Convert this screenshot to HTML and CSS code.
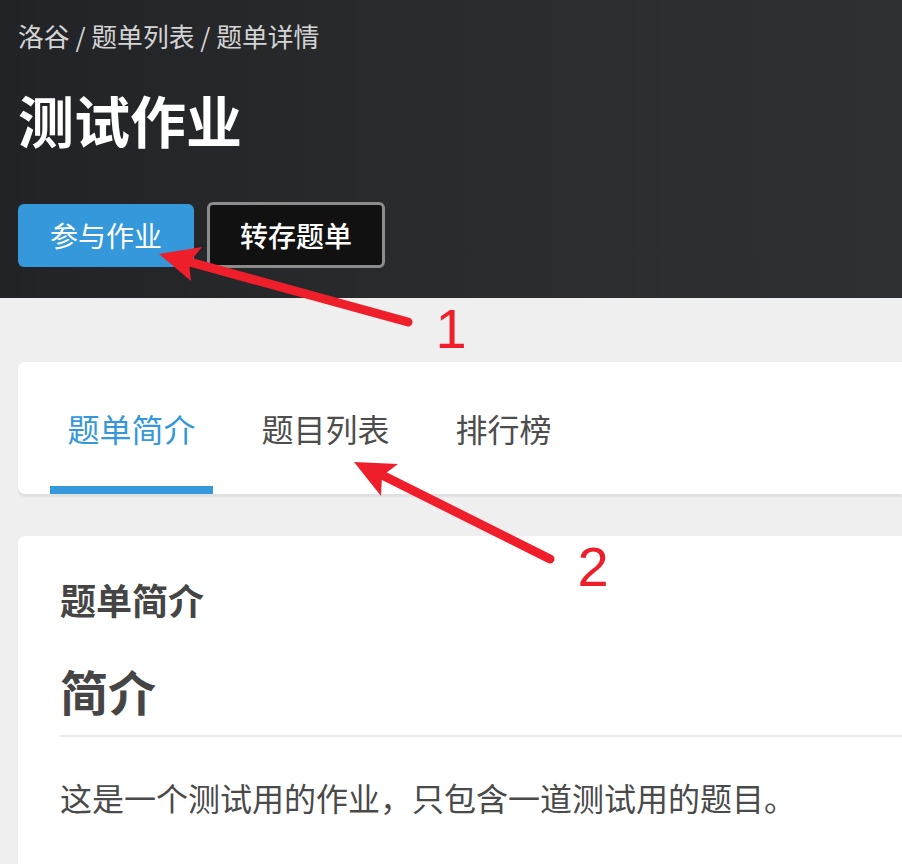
FILE: index.html
```html
<!DOCTYPE html>
<html lang="zh-CN">
<head>
<meta charset="utf-8">
<title>测试作业 - 洛谷</title>
<link rel="stylesheet" href="styles.css">
</head>
<body>
<header class="banner">
  <nav class="crumbs"><span>洛谷</span> / <span>题单列表</span> / <span>题单详情</span></nav>
  <h1 class="title">测试作业</h1>
  <div class="actions">
    <button class="btn btn-primary">参与作业</button>
    <button class="btn btn-dark">转存题单</button>
  </div>
</header>
<main class="main">
  <section class="card tab-card">
    <ul class="tabs">
      <li class="tab active">题单简介</li>
      <li class="tab">题目列表</li>
      <li class="tab">排行榜</li>
    </ul>
  </section>
  <section class="card content-card">
    <h3 class="card-title">题单简介</h3>
    <h2 class="intro-title">简介</h2>
    <div class="rule"></div>
    <p class="intro-text">这是一个测试用的作业，只包含一道测试用的题目。</p>
  </section>
</main>
<svg class="annotations" width="902" height="864" viewBox="0 0 902 864" xmlns="http://www.w3.org/2000/svg">
  <g fill="#ee1f2b" stroke="none">
    <line x1="408" y1="322" x2="186" y2="261" stroke="#ee1f2b" stroke-width="9" stroke-linecap="round"/>
    <polygon points="159,254 202,247 189,263 191,281"/>
    <line x1="550" y1="559" x2="378" y2="473" stroke="#ee1f2b" stroke-width="9" stroke-linecap="round"/>
    <polygon points="354,462 398,464 382,476 381,496"/>
    <text x="451" y="348" class="num" text-anchor="middle">1</text>
    <text x="593" y="586" class="num" text-anchor="middle">2</text>
  </g>
</svg>
</body>
</html>
```
FILE: styles.css
```css
html, body {
  margin: 0;
  padding: 0;
  overflow: hidden;
  background: #efefef;
}
body {
  position: relative;
  width: 902px;
  height: 864px;
  font-family: "Noto Sans CJK SC", "Noto Sans", sans-serif;
}
.banner {
  background: linear-gradient(90deg, #222326 0%, #2a2c2e 55%, #2e3133 100%);
  padding: 17px 18px 30px;
}
.crumbs {
  font-size: 25.8px;
  line-height: 38px;
  color: #d4d4d4;
}
.title {
  margin: 30px 0 0;
  font-size: 56px;
  line-height: 67px;
  font-weight: 700;
  color: #ffffff;
}
.actions {
  margin-top: 50px;
  display: flex;
  align-items: center;
  gap: 13px;
  height: 66px;
}
.btn {
  font-family: inherit;
  font-size: 28px;
  color: #ffffff;
  border-radius: 6px;
  box-sizing: border-box;
  cursor: pointer;
  margin: 0;
}
.btn-primary {
  height: 63px;
  padding: 0 32px;
  background: #3498db;
  border: none;
}
.btn-dark {
  height: 66px;
  padding: 0 30px;
  background: #111111;
  border: 3px solid #8c8c8c;
  font-weight: 500;
}
.main {
  padding: 64px 0 0 18px;
}
.card {
  background: #ffffff;
  border-radius: 7px 0 0 7px;
  box-shadow: 0 3px 2px rgba(0, 0, 0, 0.06);
}
.tab-card {
  height: 132px;
}
.tabs {
  list-style: none;
  margin: 0;
  padding: 0 0 0 32px;
  display: flex;
  gap: 31px;
  height: 100%;
}
.tab {
  display: flex;
  align-items: center;
  padding: 0 17.5px;
  font-size: 32px;
  color: #4d4d4d;
}
.tab.active {
  color: #3498db;
  box-shadow: inset 0 -8px 0 #3498db;
}
.content-card {
  margin-top: 42px;
  padding: 36px 0 0 42px;
  box-sizing: border-box;
  height: 328px;
  border-radius: 7px 0 0 0;
}
.card-title {
  margin: 0;
  font-size: 36px;
  line-height: 54px;
  font-weight: 700;
  color: #454545;
}
.intro-title {
  margin: 28px 0 0;
  font-size: 48px;
  line-height: 72px;
  font-weight: 700;
  color: #454545;
}
.rule {
  margin-top: 9px;
  height: 2px;
  background: #ebebeb;
}
.intro-text {
  margin: 36px 0 0;
  font-size: 32px;
  line-height: 48px;
  color: #4a4a4a;
}
.annotations {
  position: absolute;
  top: 0;
  left: 0;
  pointer-events: none;
}
.num {
  font-family: "Liberation Sans", Arial, sans-serif;
  font-size: 56px;
  font-weight: 400;
}
```
